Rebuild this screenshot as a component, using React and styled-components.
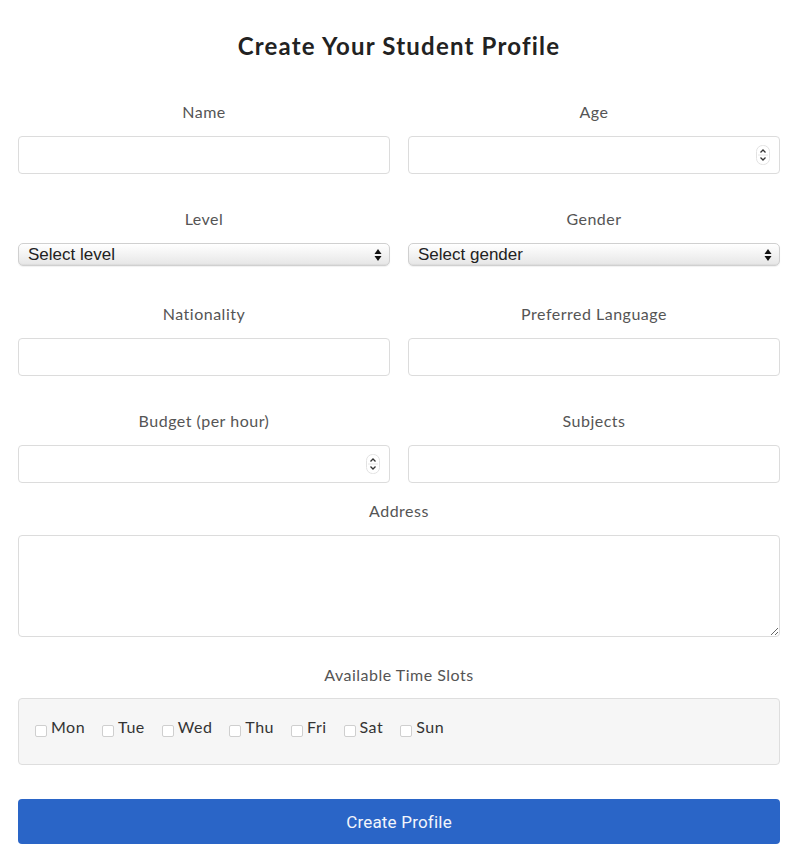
import React from 'react';
import styled, { createGlobalStyle } from 'styled-components';

const GlobalStyle = createGlobalStyle`
    * { box-sizing: border-box; }
    body {
        margin: 0;
        background: #ffffff;
        font-family: Lato, "Open Sans", sans-serif;
    }
`;

const Page = styled.form`
    width: 798px;
    padding: 32px 18px 0;
`;

const Title = styled.h1`
    margin: 0 0 42px;
    font-size: 24px;
    line-height: 28px;
    font-weight: 700;
    color: #222;
    text-align: center;
    letter-spacing: 1.2px;
`;

const Row = styled.div`
    display: grid;
    grid-template-columns: ${(p) => (p.$cols === 1 ? '1fr' : '1fr 1fr')};
    column-gap: 18px;
    margin-bottom: ${(p) => p.$space}px;
`;

const Group = styled.div`
    display: flex;
    flex-direction: column;
`;

const Label = styled.label`
    display: block;
    margin-bottom: ${(p) => p.$gap ?? 14}px;
    font-size: 16px;
    line-height: 20px;
    letter-spacing: 0.5px;
    color: #555;
    text-align: center;
`;

const FieldWrap = styled.div`
    position: relative;
`;

const Input = styled.input`
    display: block;
    width: 100%;
    height: 38px;
    padding: 0 10px;
    border: 1px solid #dcdcdc;
    border-radius: 4px;
    background: #fff;
    font: 15px Lato, sans-serif;
    outline: none;
`;

const Spinner = styled.span`
    position: absolute;
    right: 10px;
    top: 50%;
    transform: translateY(-50%);
    display: flex;
    pointer-events: none;
`;

const SelectWrap = styled.div`
    position: relative;
`;

const Select = styled.select`
    display: block;
    width: 100%;
    height: 23px;
    padding: 0 24px 0 9px;
    appearance: none;
    -webkit-appearance: none;
    border: 1px solid #d0d0d0;
    border-radius: 5px;
    background: linear-gradient(#ffffff 0%, #f4f4f4 45%, #e6e6e6 100%);
    box-shadow: inset 0 -1px 1px rgba(0, 0, 0, 0.04), 0 1px 1px rgba(0, 0, 0, 0.06);
    font: 17px "Liberation Sans", Arial, sans-serif;
    color: #222;
    outline: none;
`;

const Arrows = styled.span`
    position: absolute;
    right: 8px;
    top: 50%;
    transform: translateY(-50%);
    display: flex;
    pointer-events: none;
`;

const TextArea = styled.textarea`
    display: block;
    width: 100%;
    height: 102px;
    padding: 8px 10px;
    border: 1px solid #dcdcdc;
    border-radius: 4px;
    background: #fff;
    font: 15px Lato, sans-serif;
    outline: none;
    resize: both;
`;

const SlotBox = styled.div`
    display: flex;
    align-items: center;
    height: 67px;
    padding: 0 14px 10px;
    border: 1px solid #dedede;
    border-radius: 4px;
    background: #f6f6f6;
`;

const Slot = styled.label`
    display: flex;
    align-items: center;
    margin-right: 15px;
    font-size: 16px;
    line-height: 20px;
    letter-spacing: 0.5px;
    color: #333;
`;

const Check = styled.input`
    appearance: none;
    -webkit-appearance: none;
    width: 12px;
    height: 12px;
    margin: 8px 4px 0 2px;
    border: 1px solid #cfcfcf;
    border-radius: 2px;
    background: #fff;
`;

const Submit = styled.button`
    display: block;
    width: 100%;
    height: 45px;
    border: none;
    border-radius: 4px;
    background: #2a65c7;
    color: #f2f5fb;
    font: 17px Roboto, "Liberation Sans", sans-serif;
    letter-spacing: 0.2px;
    cursor: pointer;
`;

function SpinIcon() {
    return (
        <svg width="14" height="20" viewBox="0 0 14 20">
            <rect x="0.5" y="0.5" width="13" height="19" rx="6" fill="#fff" stroke="#e2e2e2" />
            <line x1="2" y1="10" x2="12" y2="10" stroke="#e6e6e6" />
            <path d="M4.5 7.5 L7 5 L9.5 7.5" fill="none" stroke="#333" strokeWidth="1.3" />
            <path d="M4.5 12.5 L7 15 L9.5 12.5" fill="none" stroke="#333" strokeWidth="1.3" />
        </svg>
    );
}

function UpDownIcon() {
    return (
        <svg width="8" height="14" viewBox="0 0 8 14">
            <path d="M4 1 L7.5 6 L0.5 6 Z" fill="#111" />
            <path d="M4 13 L7.5 8 L0.5 8 Z" fill="#111" />
        </svg>
    );
}

function TextField({ label, number }) {
    return (
        <Group>
            <Label>{label}</Label>
            <FieldWrap>
                <Input type="text" />
                {number && (
                    <Spinner>
                        <SpinIcon />
                    </Spinner>
                )}
            </FieldWrap>
        </Group>
    );
}

function SelectField({ label, placeholder }) {
    return (
        <Group>
            <Label>{label}</Label>
            <SelectWrap>
                <Select defaultValue="">
                    <option value="">{placeholder}</option>
                </Select>
                <Arrows>
                    <UpDownIcon />
                </Arrows>
            </SelectWrap>
        </Group>
    );
}

const days = ['Mon', 'Tue', 'Wed', 'Thu', 'Fri', 'Sat', 'Sun'];

export default function App() {
    return (
        <>
            <GlobalStyle />
            <Page onSubmit={(e) => e.preventDefault()}>
                <Title>Create Your Student Profile</Title>

                <Row $space={35}>
                    <TextField label="Name" />
                    <TextField label="Age" number />
                </Row>

                <Row $space={38}>
                    <SelectField label="Level" placeholder="Select level" />
                    <SelectField label="Gender" placeholder="Select gender" />
                </Row>

                <Row $space={35}>
                    <TextField label="Nationality" />
                    <TextField label="Preferred Language" />
                </Row>

                <Row $space={18}>
                    <TextField label="Budget (per hour)" number />
                    <TextField label="Subjects" />
                </Row>

                <Row $cols={1} $space={28}>
                    <Group>
                        <Label>Address</Label>
                        <TextArea />
                    </Group>
                </Row>

                <Row $cols={1} $space={34}>
                    <Group>
                        <Label $gap={13}>Available Time Slots</Label>
                        <SlotBox>
                            {days.map((d) => (
                                <Slot key={d}>
                                    <Check type="checkbox" />
                                    {d}
                                </Slot>
                            ))}
                        </SlotBox>
                    </Group>
                </Row>

                <Submit type="submit">Create Profile</Submit>
            </Page>
        </>
    );
}
